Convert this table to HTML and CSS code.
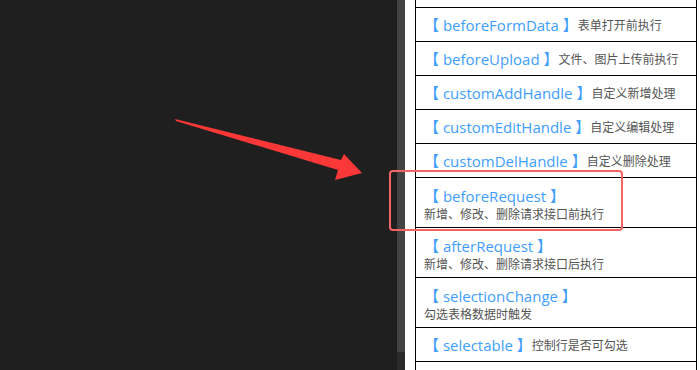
FILE: index.html
```html
<!DOCTYPE html>
<html lang="zh">
<head>
<meta charset="utf-8">
<link rel="stylesheet" href="styles.css">
</head>
<body>
<div class="screen">
  <div class="editor"></div>
  <div class="scrollbar">
    <div class="thumb"></div>
    <div class="track"></div>
  </div>
  <div class="panel">
    <div class="list">
      <div class="row cut"></div>
      <div class="row"><span class="name">【 beforeFormData 】</span><span class="desc">表单打开前执行</span></div>
      <div class="row"><span class="name">【 beforeUpload 】</span><span class="desc">文件、图片上传前执行</span></div>
      <div class="row"><span class="name">【 customAddHandle 】</span><span class="desc">自定义新增处理</span></div>
      <div class="row"><span class="name">【 customEditHandle 】</span><span class="desc">自定义编辑处理</span></div>
      <div class="row"><span class="name">【 customDelHandle 】</span><span class="desc">自定义删除处理</span></div>
      <div class="row wrap"><span class="name">【 beforeRequest 】</span><span class="desc">新增、修改、删除请求接口前执行</span></div>
      <div class="row wrap"><span class="name">【 afterRequest 】</span><span class="desc">新增、修改、删除请求接口后执行</span></div>
      <div class="row wrap"><span class="name">【 selectionChange 】</span><span class="desc">勾选表格数据时触发</span></div>
      <div class="row"><span class="name">【 selectable 】</span><span class="desc">控制行是否可勾选</span></div>
      <div class="row"></div>
    </div>
  </div>
  <div class="highlight"></div>
  <svg class="arrow" width="700" height="370" viewBox="0 0 700 370">
    <polygon points="175,119 341,160 344,154 362,173 335,180 338,170 176,121" fill="#fb3838"/>
  </svg>
</div>
</body>
</html>
```

FILE: styles.css
```css
html, body {
  margin: 0;
  padding: 0;
  background: #1f1f1f;
}

.screen {
  position: relative;
  width: 700px;
  height: 370px;
  display: flex;
  overflow: hidden;
}

.editor {
  flex: 0 0 397px;
  background: #1f1f1f;
}

.scrollbar {
  flex: 0 0 8px;
  display: flex;
  flex-direction: column;
}

.scrollbar .thumb {
  height: 352px;
  background: #424242;
}

.scrollbar .track {
  flex: 1;
  background: #2a2a2a;
}

.panel {
  flex: 1;
  background: #ffffff;
  padding-left: 10px;
}

.list {
  width: 280px;
  border-left: 1px solid #000;
  border-right: 1px solid #000;
}

.row {
  border-bottom: 1px solid #000;
  padding: 8px 6px 9px 8px;
  height: 16px;
  display: flex;
  align-items: center;
  white-space: nowrap;
}

.row.wrap {
  height: 32px;
  flex-direction: column;
  align-items: flex-start;
  justify-content: flex-start;
}

.row.cut {
  padding: 0;
  height: 7px;
}

.name {
  font-family: "Open Sans", "Noto Sans CJK SC", sans-serif;
  font-size: 15px;
  line-height: 16px;
  height: 16px;
  padding-top: 2px;
  color: #409eff;
}

.desc {
  font-family: "Noto Sans CJK SC", sans-serif;
  font-size: 12px;
  line-height: 16px;
  height: 16px;
  padding-top: 2px;
  color: #555555;
}

.row.wrap .name,
.row.wrap .desc {
  padding-top: 0;
}

.row.wrap .name {
  margin-top: 2px;
}

.row.wrap .desc {
  margin-top: 2px;
}

.highlight {
  position: absolute;
  left: 389px;
  top: 170px;
  width: 230px;
  height: 57px;
  border: 2px solid #f36464;
  border-radius: 4px;
}

.arrow {
  position: absolute;
  left: 0;
  top: 0;
  pointer-events: none;
}
```
